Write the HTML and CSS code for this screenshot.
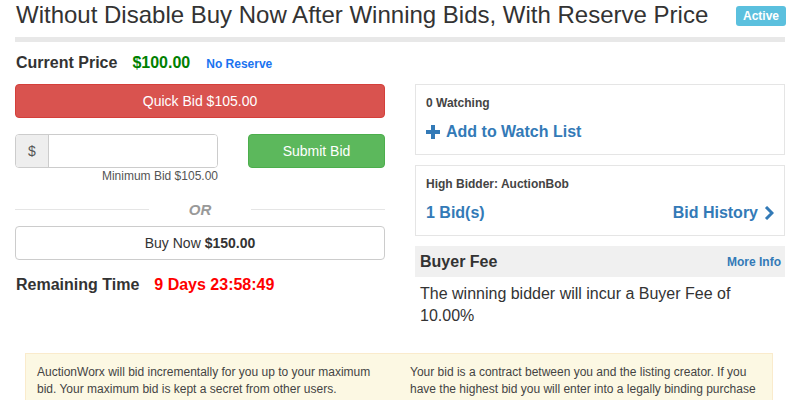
FILE: index.html
```html
<!DOCTYPE html>
<html lang="en">
<head>
<meta charset="utf-8">
<title>Listing</title>
<link rel="stylesheet" href="styles.css">
</head>
<body>
<div class="page">
  <div class="title-row">
    <h1 class="title">Without Disable Buy Now After Winning Bids, With Reserve Price</h1>
    <span class="badge">Active</span>
  </div>
  <div class="row">
    <div class="col">
      <div class="price-line">
        <span class="label">Current Price</span>
        <span class="price">$100.00</span>
        <span class="reserve">No Reserve</span>
      </div>
      <button class="btn btn-red">Quick Bid $105.00</button>
      <div class="bid-row">
        <div class="bid-input">
          <div class="input-group">
            <span class="addon">$</span>
            <span class="field"></span>
          </div>
          <div class="min-bid">Minimum Bid $105.00</div>
        </div>
        <button class="btn btn-green">Submit Bid</button>
      </div>
      <div class="or"><span>OR</span></div>
      <button class="btn btn-white">Buy Now <b>$150.00</b></button>
      <div class="time-line">
        <span class="label">Remaining Time</span>
        <span class="time">9 Days 23:58:49</span>
      </div>
    </div>
    <div class="col col-side">
      <div class="box">
        <div class="small-bold">0 Watching</div>
        <a class="link big-link"><svg class="plus" viewBox="0 0 14 14" width="14" height="14"><path d="M5 0h4v5h5v4H9v5H5V9H0V5h5z" fill="#337ab7"/></svg>Add to Watch List</a>
      </div>
      <div class="box">
        <div class="small-bold">High Bidder: AuctionBob</div>
        <div class="bids-line">
          <a class="link big-link">1 Bid(s)</a>
          <a class="link big-link">Bid History <svg class="chev" viewBox="0 0 10 14" width="10" height="14"><path d="M2 1l6 6-6 6" fill="none" stroke="#337ab7" stroke-width="3"/></svg></a>
        </div>
      </div>
      <div class="fee">
        <div class="fee-head">
          <span class="fee-title">Buyer Fee</span>
          <a class="link more">More Info</a>
        </div>
        <p class="fee-body">The winning bidder will incur a Buyer Fee of 10.00%</p>
      </div>
    </div>
  </div>
  <div class="notice">
    <p>AuctionWorx will bid incrementally for you up to your maximum bid. Your maximum bid is kept a secret from other users.</p>
    <p>Your bid is a contract between you and the listing creator. If you have the highest bid you will enter into a legally binding purchase contract.</p>
  </div>
</div>
</body>
</html>
```
FILE: styles.css
```css
* { box-sizing: border-box; }
body {
  margin: 0;
  font-family: "Liberation Sans", Arial, sans-serif;
  color: #333;
  background: #fff;
}
.page { padding: 0 15px; }

.title-row {
  display: flex;
  align-items: flex-start;
  justify-content: space-between;
  border-bottom: 5px solid #e8e8e8;
  height: 42px;
}
.title {
  margin: 0;
  font-size: 24px;
  font-weight: normal;
  line-height: 30px;
  padding-left: 1px;
}
.badge {
  margin-top: 6px;
  background: #5bc0de;
  color: #fff;
  font-weight: bold;
  font-size: 12px;
  line-height: 20px;
  height: 20px;
  padding: 0 7px;
  border-radius: 3px;
  margin-right: -1px;
}

.row {
  display: grid;
  grid-template-columns: 370px 370px;
  gap: 30px;
  padding-top: 10px;
}

.price-line {
  display: flex;
  align-items: baseline;
  height: 32px;
  padding-top: 2px;
  padding-left: 1px;
}
.label { font-size: 16px; font-weight: bold; }
.price { color: #008000; font-weight: bold; font-size: 16px; margin-left: 15px; }
.reserve { color: #1a73f0; font-weight: bold; font-size: 12px; margin-left: 16px; }

.btn {
  display: block;
  width: 100%;
  font-family: inherit;
  font-size: 14px;
  border-radius: 4px;
  border: 1px solid transparent;
  cursor: pointer;
  padding: 0;
}
.btn-red {
  height: 34px;
  background: #d9534f;
  border-color: #d43f3a;
  color: #fff;
}
.bid-row {
  display: flex;
  justify-content: space-between;
  margin-top: 16px;
}
.bid-input { width: 203px; }
.input-group {
  display: flex;
  height: 34px;
  border: 1px solid #ccc;
  border-radius: 4px;
  overflow: hidden;
}
.addon {
  width: 33px;
  background: #eee;
  border-right: 1px solid #ccc;
  color: #555;
  font-size: 14px;
  display: flex;
  align-items: center;
  justify-content: center;
}
.field { flex: 1; background: #fff; }
.min-bid {
  text-align: right;
  font-size: 12px;
  color: #555;
  line-height: 14px;
  margin-top: 1px;
}
.btn-green {
  width: 137px;
  height: 34px;
  background: #5cb85c;
  border-color: #4cae4c;
  color: #fff;
}

.or {
  display: flex;
  align-items: center;
  gap: 14px;
  margin-top: 17px;
  height: 18px;
  color: #999;
  font-style: italic;
  font-weight: bold;
  font-size: 15px;
}
.or::before, .or::after {
  content: "";
  flex: 1;
  border-top: 1px solid #e5e5e5;
}
.or::before { margin-right: 26px; }
.or::after { margin-left: 26px; }

.btn-white {
  margin-top: 8px;
  height: 34px;
  background: #fff;
  border-color: #ccc;
  color: #333;
}
.time-line {
  display: flex;
  align-items: baseline;
  margin-top: 16px;
  padding-left: 1px;
}
.time { color: #f00; font-weight: bold; font-size: 16px; margin-left: 15px; }

.col-side { padding-top: 32px; }
.box {
  border: 1px solid #e5e5e5;
  height: 71px;
  padding: 10px 10px 0 10px;
  margin-bottom: 10px;
}
.small-bold { font-size: 12px; font-weight: bold; color: #444; line-height: 16px; }
.link { color: #337ab7; text-decoration: none; }
.big-link {
  font-size: 16px;
  font-weight: bold;
  display: inline-flex;
  align-items: center;
}
.box .big-link { margin-top: 12px; }
.plus { margin-right: 6px; }
.bids-line {
  display: flex;
  justify-content: space-between;
}
.chev { margin-left: 6px; }

.fee { margin-top: 1px; }
.fee-head {
  background: #f0f0f0;
  height: 31px;
  display: flex;
  align-items: center;
  justify-content: space-between;
  padding: 0 4px 0 5px;
}
.fee-title { font-size: 16px; font-weight: bold; }
.more { font-size: 12px; font-weight: bold; }
.fee-body {
  margin: 6px 0 0 5px;
  font-size: 16px;
  line-height: 22px;
}

.notice {
  margin: 26px 12px 0 10px;
  background: #fcf8e3;
  border: 1px solid #faebcc;
  display: grid;
  grid-template-columns: 1fr 1fr;
  gap: 22px;
  padding: 10px 11px 12px 11px;
}
.notice p {
  margin: 0;
  font-size: 12px;
  line-height: 17px;
  color: #444;
}
```
